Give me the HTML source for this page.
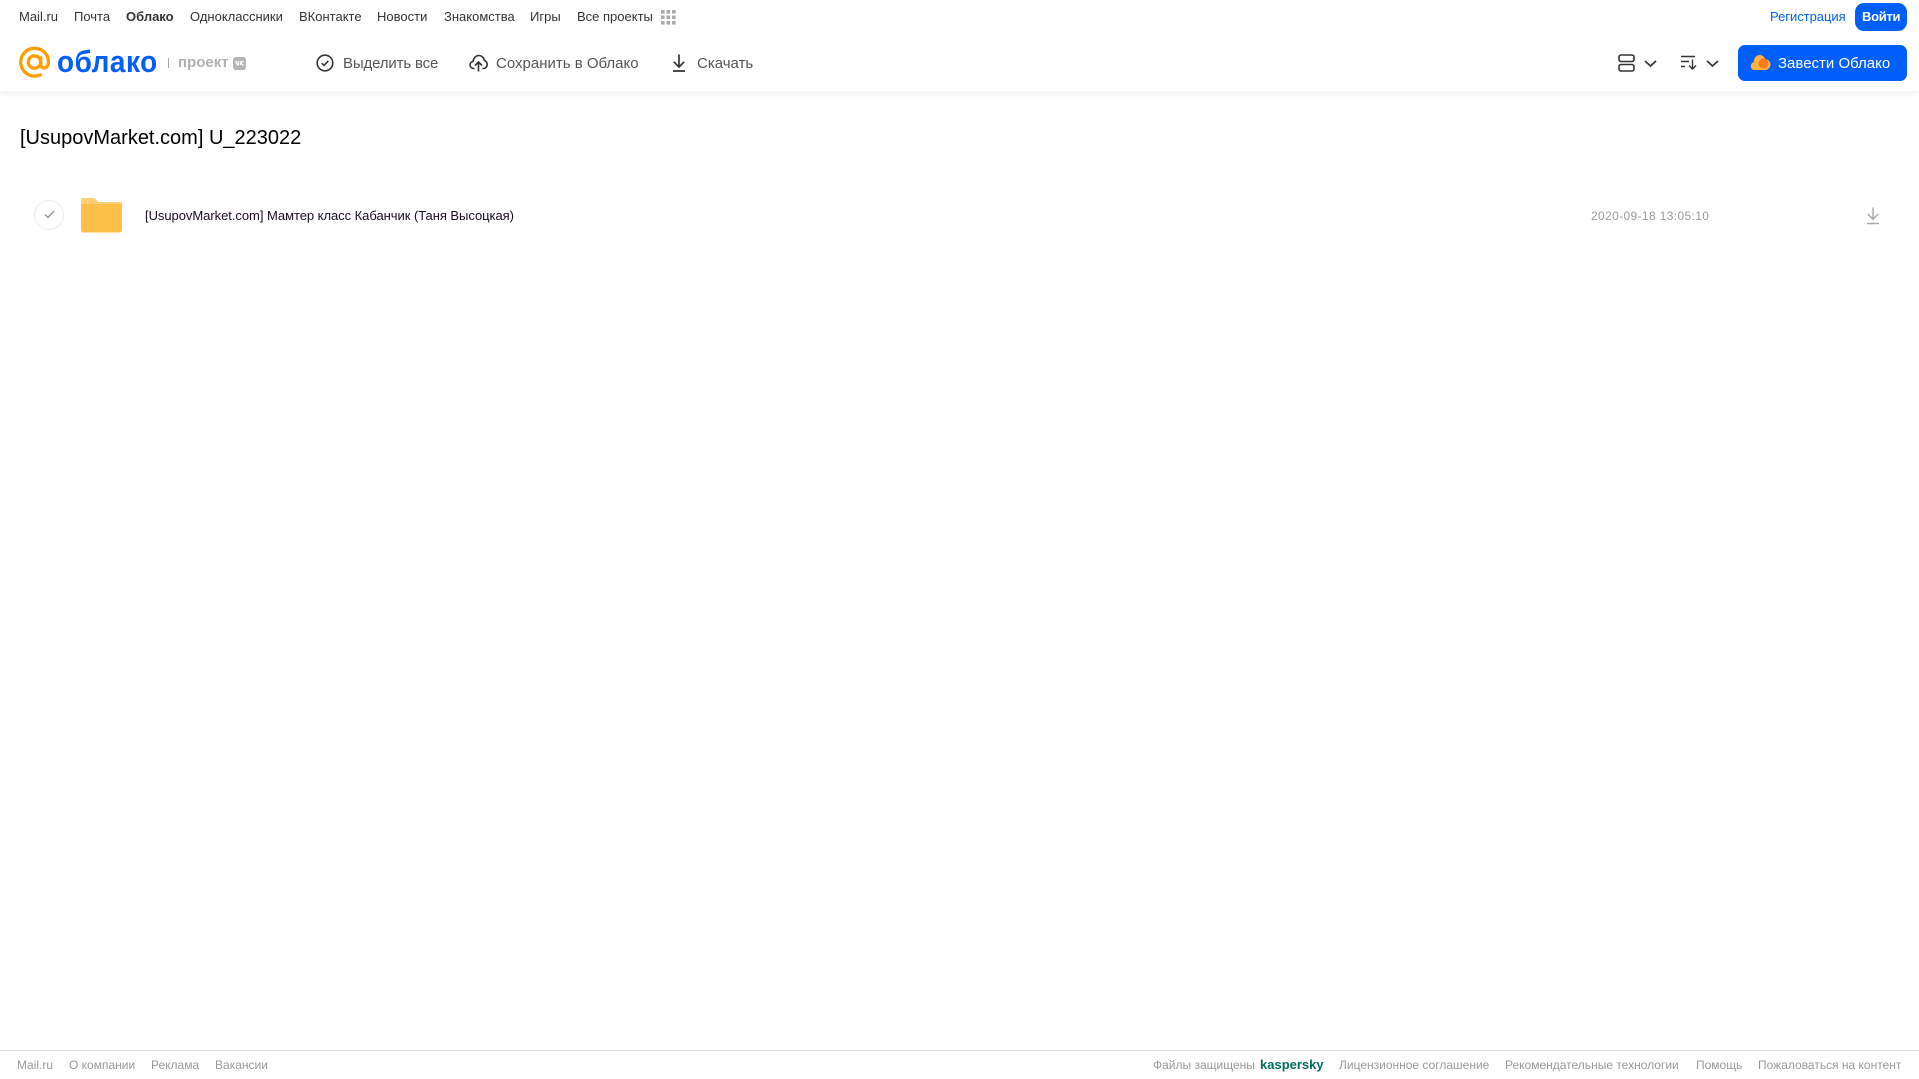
<!DOCTYPE html>
<html lang="ru"><head><meta charset="utf-8"><title>Облако</title>
<style>
html,body{margin:0;padding:0;background:#fff}
#p{position:relative;width:1919px;height:1079px;overflow:hidden;background:#fff;font-family:"Liberation Sans",sans-serif}
#p span,#p a{position:absolute;white-space:nowrap;display:block}
#p svg{position:absolute;display:block}
.n{font-size:13px;line-height:16px;top:9px;color:#333}
.t{font-size:15px;line-height:18px;top:55px;color:#555}
.f{font-size:12px;line-height:14px;top:1058px;color:#999}
</style></head><body><div id="p">
<div style="position:absolute;left:0;top:0;width:1919px;height:91px;background:#fff;box-shadow:0 2px 6px rgba(0,0,0,.07)"></div>

<span class="n" style="left:19px">Mail.ru</span>
<span class="n" style="left:74px">Почта</span>
<span class="n" style="left:126px;font-weight:bold">Облако</span>
<span class="n" style="left:190px">Одноклассники</span>
<span class="n" style="left:299px">ВКонтакте</span>
<span class="n" style="left:377px">Новости</span>
<span class="n" style="left:444px">Знакомства</span>
<span class="n" style="left:530px">Игры</span>
<span class="n" style="left:577px">Все проекты</span>
<svg style="left:661px;top:10px" width="15" height="15" fill="#aaa"><rect x="0" y="0" width="3.6" height="3.6"/><rect x="5.500" y="0" width="3.6" height="3.6"/><rect x="11" y="0" width="3.6" height="3.6"/><rect x="0" y="5.500" width="3.6" height="3.6"/><rect x="5.500" y="5.500" width="3.6" height="3.6"/><rect x="11" y="5.500" width="3.6" height="3.6"/><rect x="0" y="11" width="3.6" height="3.6"/><rect x="5.500" y="11" width="3.6" height="3.6"/><rect x="11" y="11" width="3.6" height="3.6"/></svg>

<span class="n" style="left:1770px;color:#005ff9;letter-spacing:-.03px">Регистрация</span>
<div style="position:absolute;left:1855px;top:3px;width:52px;height:28px;border-radius:9px;background:#005ff9"></div>
<span class="n" style="left:1862px;color:#fff;font-weight:bold;letter-spacing:-.3px">Войти</span>

<svg style="left:18px;top:46px" width="33" height="33" viewBox="0 0 34 34" fill="none" stroke="#ff9e00" stroke-width="3.4"><circle cx="17" cy="16.500" r="6.400"/><path d="M23.400 10.500v8.200c0 2.500 1.400 3.900 3.400 3.900 2.600 0 4.600-2.600 4.600-6.300C31.400 8.400 25 2.400 17 2.400 9 2.400 2.800 8.800 2.800 16.500S9 31 17 31c2.900 0 5.300-.7 7.400-2"/></svg>
<span style="left:57px;top:44px;font-size:31px;line-height:36px;color:#005ff9;font-weight:bold;letter-spacing:.6px;transform:scaleX(.9);transform-origin:0 0">облако</span>
<div style="position:absolute;left:168px;top:58px;width:1px;height:10px;background:#aaa"></div>
<span style="left:178px;top:54px;font-size:15px;line-height:18px;color:#b0b0b0;font-weight:bold">проект</span>
<div style="position:absolute;left:233px;top:57px;width:13px;height:13px;border-radius:3px;background:#b5b5b5"></div>
<svg style="left:235px;top:60px" width="9" height="7" fill="none" stroke="#fff" stroke-width="1.300"><path d="M.5 1l1.800 4 1-.3V1M5.500 1v4M8.500 1L5.700 3l2.800 2.500"/></svg>

<svg style="left:316px;top:54px" width="18" height="18" viewBox="0 0 18 18" fill="none" stroke="#333" stroke-width="1.600"><circle cx="9" cy="9" r="7.800"/><path d="M5.700 9.200l2.300 2.200 4.300-4.500"/></svg>
<span class="t" style="left:343px;letter-spacing:-.15px">Выделить все</span>
<svg style="left:469px;top:54px" width="19" height="18" viewBox="0 0 19 18" fill="none" stroke="#333" stroke-width="1.600"><path d="M5.500 14.500H4.700C2.700 14.500 1 12.900 1 11c0-1.800 1.300-3.200 3-3.500C4.500 4 6.900 1.500 9.800 1.500c2.800 0 5 2 5.500 4.800 1.700.5 2.900 2.400 2.900 4.200 0 2.200-1.700 4-3.800 4h-.9"/><path d="M9.500 17.500V8.500M6 11.500l3.500-3.500 3.500 3.500"/></svg>
<span class="t" style="left:496px">Сохранить в Облако</span>
<svg style="left:672px;top:54px" width="14" height="18" viewBox="0 0 14 18" fill="none" stroke="#333" stroke-width="1.700"><path d="M7 0.500V12.500M1.800 7.800L7 13l5.200-5.200M1 17h12"/></svg>
<span class="t" style="left:697px">Скачать</span>

<svg style="left:1618px;top:54px" width="17" height="18" fill="none" stroke="#333" stroke-width="1.600"><rect x="1" y="1" width="15" height="6.500" rx="2"/><rect x="1" y="10.500" width="15" height="6.500" rx="2"/></svg>
<svg style="left:1644px;top:60px" width="13" height="8" fill="none" stroke="#333" stroke-width="1.700"><path d="M1 1l5.500 5L12 1"/></svg>
<svg style="left:1681px;top:55px" width="17" height="15" fill="none" stroke="#333" stroke-width="1.400"><path d="M0 1.500h14M0 6.500h8M0 11.500h4M11.500 4.500V14M8 10.500l3.500 3.500 3.500-3.500"/></svg>
<svg style="left:1706px;top:60px" width="13" height="8" fill="none" stroke="#333" stroke-width="1.700"><path d="M1 1l5.500 5L12 1"/></svg>
<div style="position:absolute;left:1738px;top:45px;width:169px;height:36px;border-radius:7px;background:#005ff9"></div>
<svg style="left:1750px;top:54px" width="21" height="17" viewBox="0 0 21 17"><path d="M4.500 16C2 16 .8 14 .8 12.200c0-2 1.200-3.500 2.800-3.900C4 4 6.500 1 9.500 1c2.800 0 4.800 1.700 5.700 4 3 .3 5.300 2.700 5.300 5.500 0 3-2.400 5.500-5.500 5.500z" fill="#ffb340"/><circle cx="13.500" cy="9.500" r="5" fill="#ff7a1f"/></svg>
<span class="t" style="left:1778px;color:#fff">Завести Облако</span>

<span style="left:20px;top:126px;font-size:20px;line-height:24px;color:#000">[UsupovMarket.com] U_223022</span>

<div style="position:absolute;left:34px;top:200px;width:30px;height:30px;border:1px solid #ececec;border-radius:50%;box-sizing:border-box"></div>
<svg style="left:44px;top:210px" width="11" height="9" fill="none" stroke="#999" stroke-width="1.500"><path d="M1 4.500l3 3L10 1"/></svg>
<svg style="left:81px;top:197px" width="41" height="36" viewBox="0 0 41 36"><path d="M2 1h10c2 0 3 1 4 2.500L17.500 5H39c1.500 0 2 .8 2 2v5H0V3c0-1.200.8-2 2-2z" fill="#ffcf75"/><path d="M0 7h39.500c1 0 1.500.7 1.500 1.500V33c0 1.500-.8 2.500-2.500 2.500H2.500C.8 35.500 0 34.500 0 33z" fill="#ffc04a"/></svg>
<span style="left:145px;top:208px;font-size:13px;line-height:15px;color:#1a0a20;letter-spacing:-.045px">[UsupovMarket.com] Мамтер класс Кабанчик (Таня Высоцкая)</span>

<span style="left:1591px;top:209px;font-size:12px;line-height:15px;color:#999;letter-spacing:.36px">2020-09-18 13:05:10</span>
<svg style="left:1866px;top:207px" width="14" height="18" viewBox="0 0 14 18" fill="none" stroke="#aaa" stroke-width="1.500"><path d="M7 0.500V12M1.800 7L7 12.300 12.200 7M1 16.500h12"/></svg>

<div style="position:absolute;left:0;top:1050px;width:1919px;height:1px;background:#ddd"></div>
<span class="f" style="left:17px">Mail.ru</span>
<span class="f" style="left:69px">О компании</span>
<span class="f" style="left:151px">Реклама</span>
<span class="f" style="left:215px">Вакансии</span>
<span class="f" style="left:1153px">Файлы защищены</span>
<span class="f" style="left:1260px;top:1058px;font-size:13px;font-weight:bold;color:#006d5c">kaspersky</span>
<span class="f" style="left:1339px">Лицензионное соглашение</span>
<span class="f" style="left:1505px">Рекомендательные технологии</span>
<span class="f" style="left:1696px">Помощь</span>
<span class="f" style="left:1758px">Пожаловаться на контент</span>
</div></body></html>
